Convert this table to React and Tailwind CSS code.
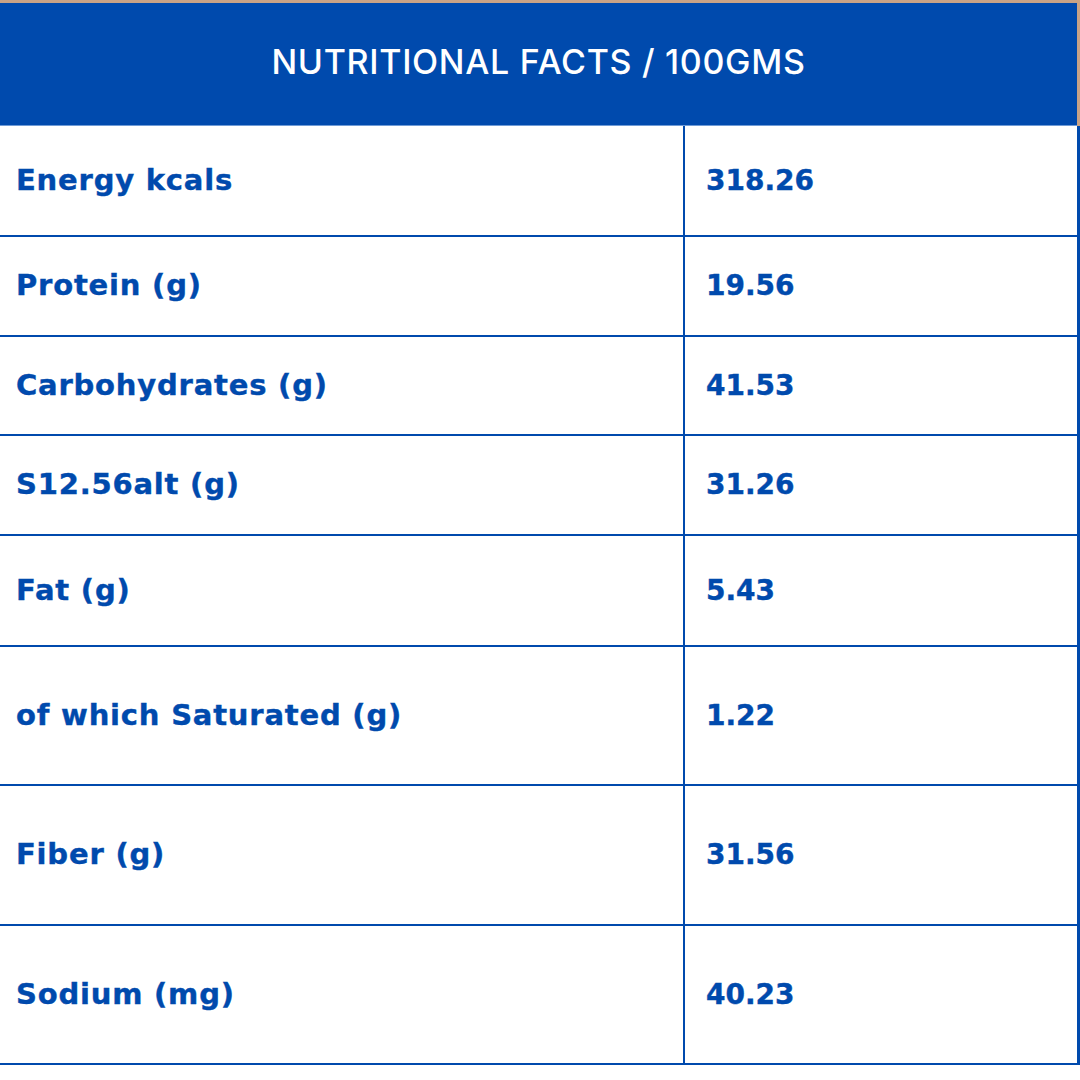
const ROWS = [
  { label: 'Energy kcals', value: '318.26', h: 'h-[111px]' },
  { label: 'Protein (g)', value: '19.56', h: 'h-[100px]' },
  { label: 'Carbohydrates (g)', value: '41.53', h: 'h-[99px]' },
  { label: 'S12.56alt (g)', value: '31.26', h: 'h-[100px]' },
  { label: 'Fat (g)', value: '5.43', h: 'h-[111px]' },
  { label: 'of which Saturated (g)', value: '1.22', h: 'h-[139px]' },
  { label: 'Fiber (g)', value: '31.56', h: 'h-[140px]' },
  { label: 'Sodium (mg)', value: '40.23', h: 'h-[139px]' },
]

export default function App() {
  return (
    <div className="w-[1080px] h-[1080px] bg-white overflow-hidden font-['Inter',sans-serif]">
      <div className="h-[3px] bg-[#c9a386]" />
      <div className="flex h-[123px]">
        <div className="flex-1 bg-[#004aad] flex items-center justify-center border-b border-[#6f9bd6]">
          <h1 className="text-white text-[34px] font-medium tracking-[0.7px] -mt-[5px]">NUTRITIONAL FACTS / 100GMS</h1>
        </div>
        <div className="w-[3px] bg-[#c9a386]" />
      </div>
      <div className="border-r-[3px] border-[#004aad] font-['DejaVu_Sans',sans-serif] text-[#004aad] font-bold [-webkit-text-stroke:0.4px_#004aad]">
        {ROWS.map(row => (
          <div key={row.label} className={`flex ${row.h} border-b-2 border-[#004aad]`}>
            <div className="w-[685px] border-r-2 border-[#004aad] flex items-center pl-4">
              <span className="text-[29px] tracking-[0.8px]">{row.label}</span>
            </div>
            <div className="flex-1 flex items-center pl-[21px]">
              <span className="text-[28px]">{row.value}</span>
            </div>
          </div>
        ))}
      </div>
    </div>
  )
}
